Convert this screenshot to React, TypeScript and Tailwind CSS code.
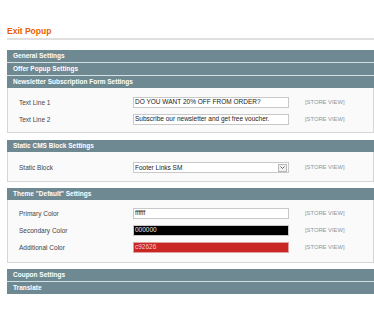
import React from 'react';

const font = { fontFamily: '"Liberation Sans", Arial, sans-serif' };

function Head({ title, sep }: { title: string; sep?: boolean }) {
  return (
    <div className={`h-[12px] bg-[#6f8992] pl-[6px] text-[6.5px] font-bold leading-[12px] text-white ${sep ? 'mb-[1px]' : ''}`}>
      {title}
    </div>
  );
}

function StoreView() {
  return <span className="ml-[16px] text-[5.8px] uppercase text-[#8e979b]">[Store View]</span>;
}

function Row({ label, children }: { label: string; children: React.ReactNode }) {
  return (
    <div className="flex h-[11px] items-center">
      <div className="w-[114px] text-[6.5px] text-[#444]">{label}</div>
      {children}
      <StoreView />
    </div>
  );
}

function Input({ value, className = 'bg-white text-[#222]' }: { value: string; className?: string }) {
  return (
    <div className={`flex h-[11px] w-[156px] items-center border border-[#c8c8c8] pl-[1px] text-[6.5px] leading-none ${className}`}>
      {value}
    </div>
  );
}

export default function App() {
  return (
    <div className="h-[328px] w-full overflow-hidden bg-white pl-[7px] pt-[26px]" style={font}>
      <div className="h-[10px] text-[8.5px] font-bold leading-[10px] text-[#eb5e00]">Exit Popup</div>
      <div className="mt-[2px] h-[2px] bg-[#e0e0e0]" />

      <div className="mt-[10px] bg-[#d3e0e3]">
        <Head title="General Settings" sep />
        <Head title="Offer Popup Settings" sep />
        <Head title="Newsletter Subscription Form Settings" />
      </div>
      <div className="flex flex-col gap-[6px] border-x border-b border-[#d6d6d6] bg-[#fafafa] pb-[7px] pl-[11px] pt-[9px]">
        <Row label="Text Line 1">
          <Input value="DO YOU WANT 20% OFF FROM ORDER?" />
        </Row>
        <Row label="Text Line 2">
          <Input value="Subscribe our newsletter and get free voucher." />
        </Row>
      </div>

      <div className="mt-[7px]">
        <Head title="Static CMS Block Settings" />
      </div>
      <div className="border-x border-b border-[#d6d6d6] bg-[#fafafa] pb-[8px] pl-[11px] pt-[10px]">
        <Row label="Static Block">
          <div className="flex h-[11px] w-[156px] items-center justify-between border border-[#c8c8c8] bg-white pl-[1px] pr-[1px] text-[6.5px] text-[#222]">
            <span>Footer Links SM</span>
            <span className="flex h-[8px] w-[9px] items-center justify-center border border-[#b8b8b8] bg-[#f0f0f0]">
              <svg width="5" height="3" viewBox="0 0 5 3">
                <path d="M0.5 0.5 L2.5 2.5 L4.5 0.5" fill="none" stroke="#555" strokeWidth="0.9" />
              </svg>
            </span>
          </div>
        </Row>
      </div>

      <div className="mt-[6px]">
        <Head title='Theme "Default" Settings' />
      </div>
      <div className="flex flex-col gap-[6px] border-x border-b border-[#d6d6d6] bg-[#fafafa] pb-[9px] pl-[11px] pt-[8px]">
        <Row label="Primary Color">
          <Input value="ffffff" />
        </Row>
        <Row label="Secondary Color">
          <Input value="000000" className="bg-black text-[#e8e8e8]" />
        </Row>
        <Row label="Additional Color">
          <Input value="c92626" className="bg-[#c92626] text-[#f4c9c9] border-[#e0a0a0]" />
        </Row>
      </div>

      <div className="mt-[6px] bg-[#d3e0e3]">
        <Head title="Coupon Settings" sep />
        <Head title="Translate" />
      </div>
    </div>
  );
}
